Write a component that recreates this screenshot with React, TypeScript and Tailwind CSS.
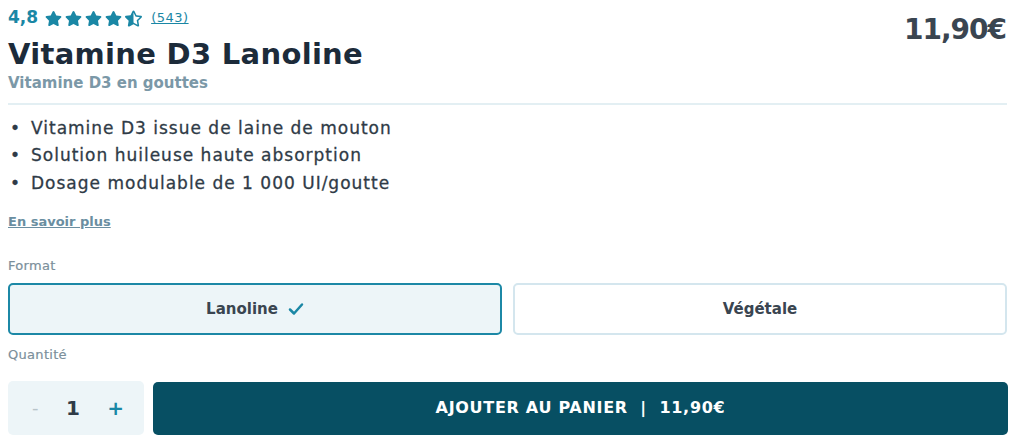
import React from "react";
import { FaStar, FaStarHalfAlt } from "react-icons/fa";

export default function App() {
  const font = { fontFamily: '"DejaVu Sans", "Noto Sans", sans-serif' };
  return (
    <div className="w-[1024px] h-[446px] bg-white px-2 text-[#2f3b47]" style={font}>
      <div className="flex justify-between">
        <div>
          <div className="flex items-center gap-[7px] h-[34px] pt-[2px]">
            <span className="text-[17px] font-semibold text-[#1a87a5]">4,8</span>
            <div className="flex gap-[3px] text-[#1a87a5] text-[17px]">
              <FaStar />
              <FaStar />
              <FaStar />
              <FaStar />
              <FaStarHalfAlt />
            </div>
            <span className="text-[13px] text-[#1a87a5] underline ml-[2px] tracking-[0.5px]">(543)</span>
          </div>
          <h1 className="text-[29px] leading-[38px] font-semibold text-[#1c2b3a] mt-[1px] tracking-[0.3px]">Vitamine D3 Lanoline</h1>
          <div className="text-[15px] font-semibold text-[#7b98a7] -mt-[1px]">Vitamine D3 en gouttes</div>
        </div>
        <div className="text-[28px] font-bold text-[#3a4550] pt-[9px] pr-[10px] tracking-[-1px]">11,90€</div>
      </div>
      <div className="mt-[8px] h-[2px] bg-[#e3eff3] w-[999px]" />
      <ul className="mt-[10px] text-[17px] leading-[27.5px] text-[#2f3b47] tracking-[1px] [-webkit-text-stroke:0.3px_#2f3b47]">
        <li className="flex items-center"><span className="w-[23px] pl-[2px]">•</span>Vitamine D3 issue de laine de mouton</li>
        <li className="flex items-center"><span className="w-[23px] pl-[2px]">•</span>Solution huileuse haute absorption</li>
        <li className="flex items-center"><span className="w-[23px] pl-[2px]">•</span>Dosage modulable de 1 000 UI/goutte</li>
      </ul>
      <div className="mt-[15px] text-[13px] font-semibold text-[#6a8ea1] underline">En savoir plus</div>
      <div className="mt-[24px] text-[13px] text-[#7b8f9b] tracking-[0.3px] [-webkit-text-stroke:0.2px_#7b8f9b]">Format</div>
      <div className="mt-[8px] flex gap-[11px] w-[999px]">
        <div className="flex-1 h-[52px] rounded-[5px] border-2 border-[#1c88a6] bg-[#edf5f8] flex items-center justify-center gap-[10px] text-[15px] font-semibold text-[#3a4550]">
          Lanoline
          <svg width="16" height="14" viewBox="0 0 16 14" fill="none">
            <path d="M2 7.5 L6 11.5 L14 2.5" stroke="#1a87a5" strokeWidth="2.5" strokeLinecap="round" strokeLinejoin="round" />
          </svg>
        </div>
        <div className="flex-1 h-[52px] rounded-[5px] border-2 border-[#d4e6ee] bg-white flex items-center justify-center text-[15px] font-semibold text-[#3a4550]">
          Végétale
        </div>
      </div>
      <div className="mt-[10px] text-[13px] text-[#7b8f9b] tracking-[0.3px] [-webkit-text-stroke:0.2px_#7b8f9b]">Quantité</div>
      <div className="mt-[16px] flex gap-[9px] w-[1000px]">
        <div className="w-[136px] h-[54px] rounded-[5px] bg-[#edf5f8] flex items-center justify-between pl-[24px] pr-[20px]">
          <span className="text-[18px] text-[#b8c4ca]">-</span>
          <span className="text-[20px] font-semibold text-[#2f3b47]">1</span>
          <span className="text-[20px] font-bold text-[#1a87a5]">+</span>
        </div>
        <div className="flex-1 h-[53px] mt-[1px] rounded-[5px] bg-[#074f63] flex items-center justify-center text-white text-[16px] font-bold tracking-[0.7px]">
          AJOUTER AU PANIER&nbsp;&nbsp;|&nbsp;&nbsp;11,90€
        </div>
      </div>
    </div>
  );
}
